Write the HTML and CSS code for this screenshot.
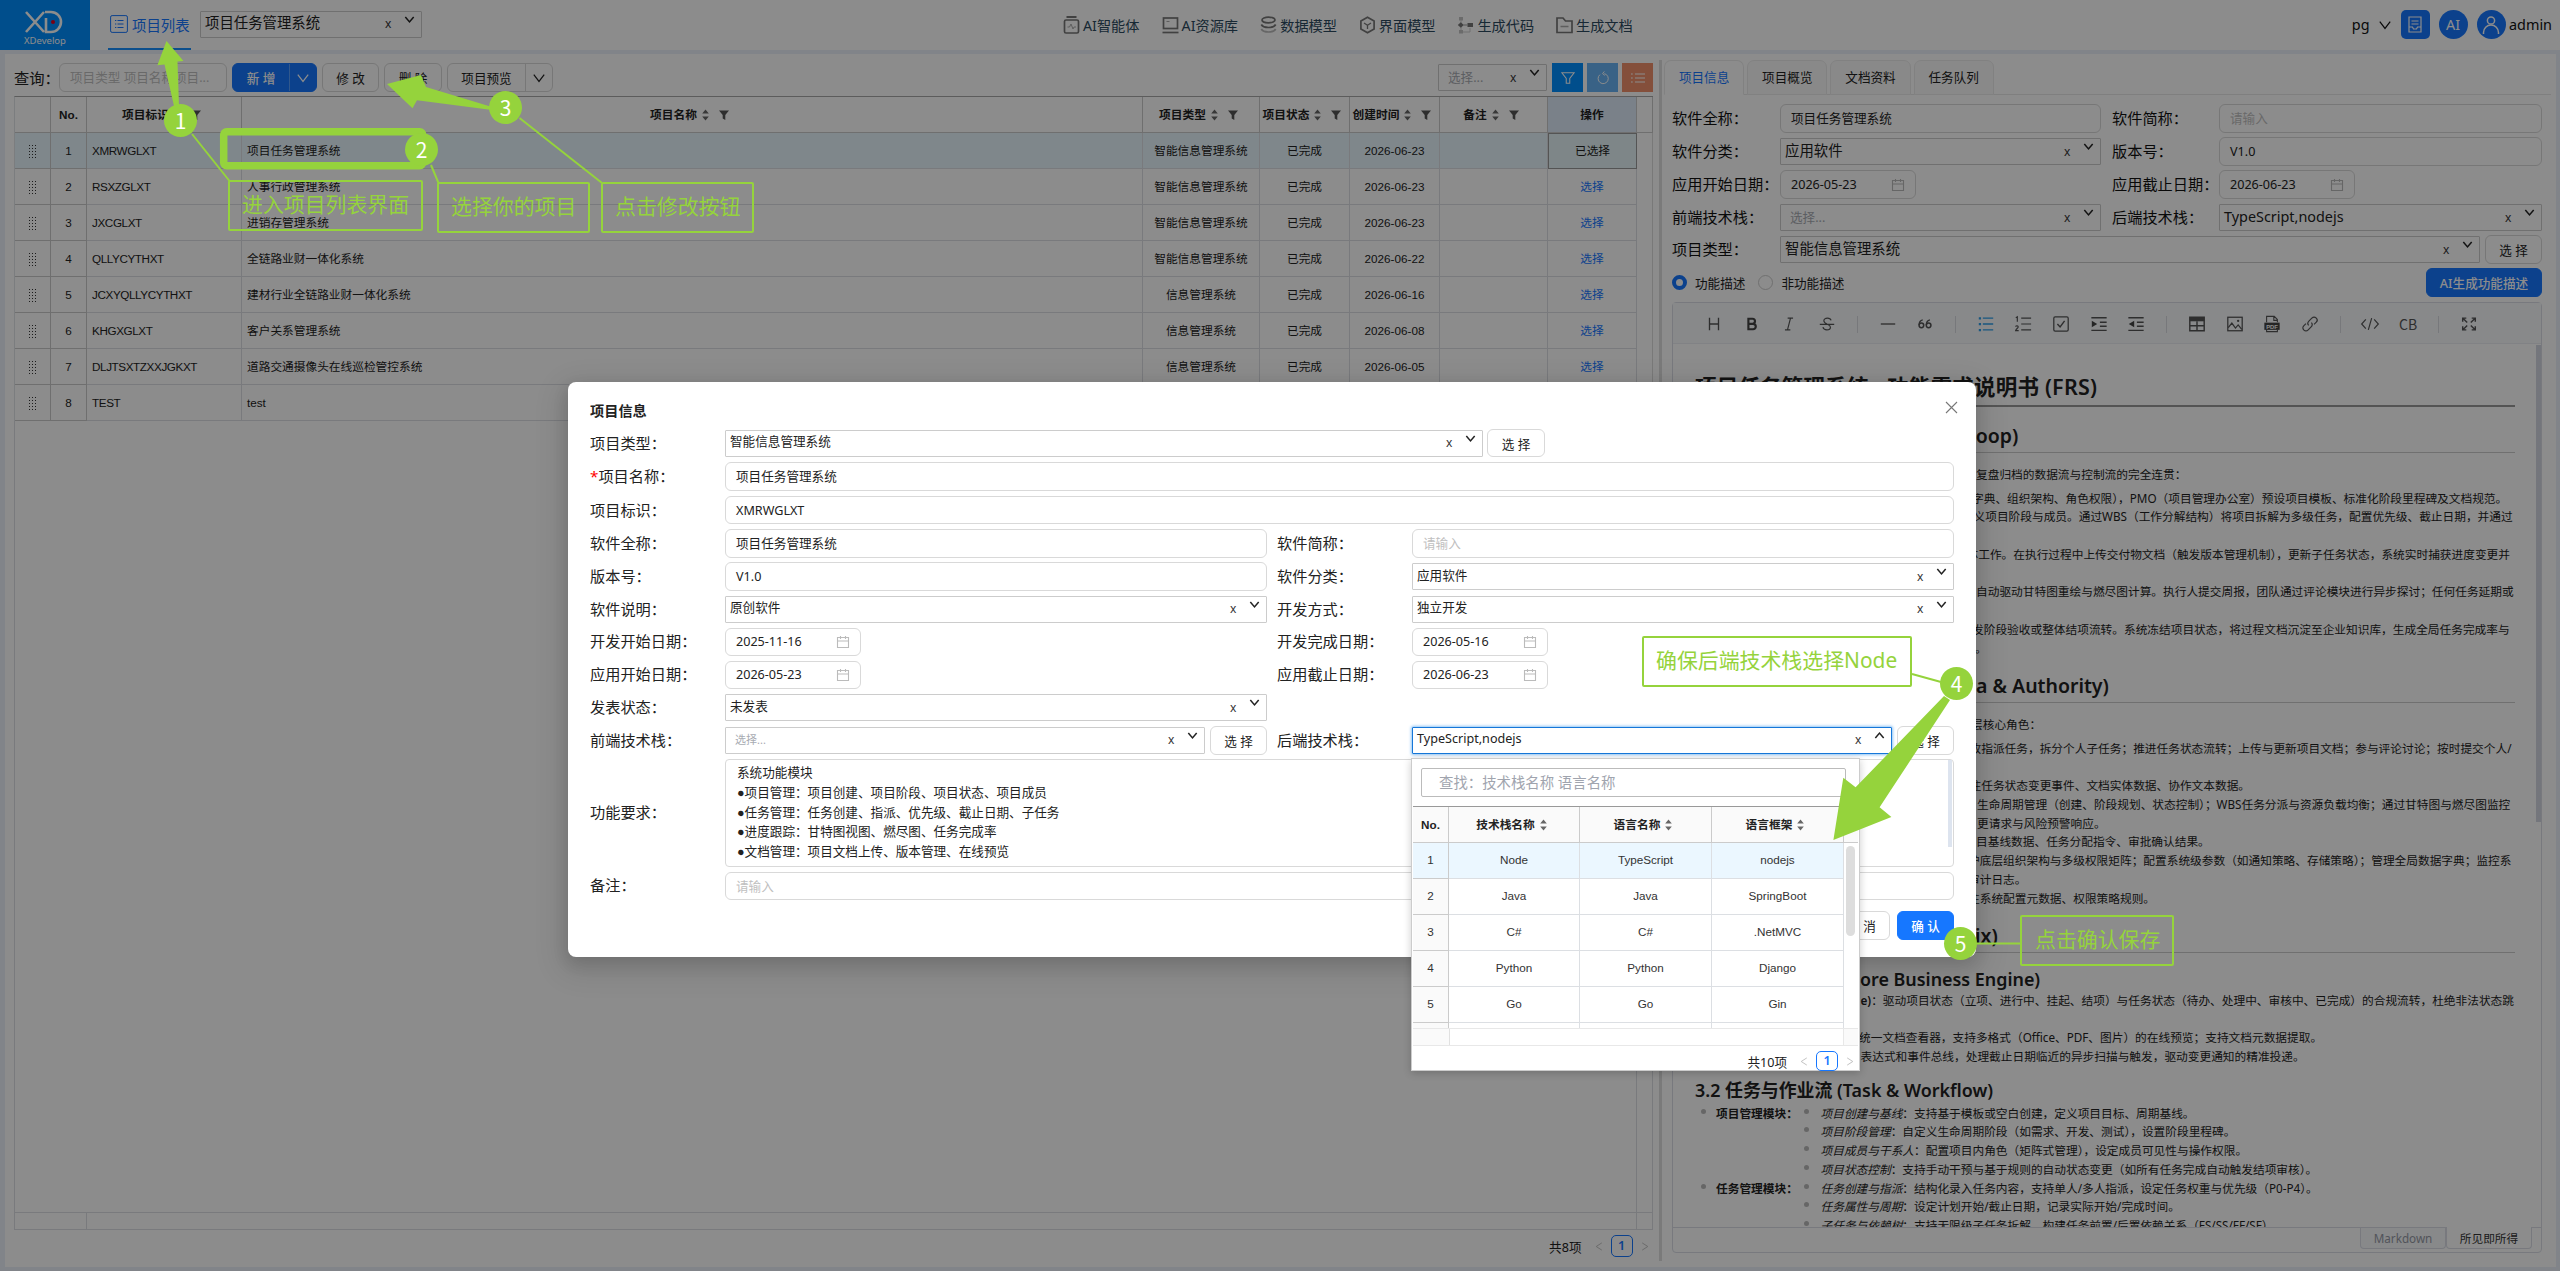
FILE: index.html
```html
<!DOCTYPE html>
<html lang="zh-CN">
<head>
<meta charset="utf-8">
<title>XDevelop</title>
<link rel="stylesheet" href="styles.css">
</head>
<body>
<svg class="defs" width="0" height="0">
  <symbol id="chev" viewBox="0 0 10 10"><path d="M1.2 2.8 5 7.2 8.8 2.8" fill="none" stroke="currentColor" stroke-width="1.4"/></symbol>
  <symbol id="down" viewBox="0 0 12 12"><path d="M.8 2.6 6 9.4 11.2 2.6" fill="none" stroke="currentColor" stroke-width="1.2"/></symbol>
  <symbol id="sort" viewBox="0 0 7 12"><path d="M3.5 .5 6.8 4.6H.2ZM3.500 11.500 .2 7.400h6.600Z" fill="currentColor"/></symbol>
  <symbol id="filter" viewBox="0 0 10 10"><path d="M0 .5h10L6.3 5v5L3.7 8.400V5Z" fill="currentColor"/></symbol>
  <symbol id="cal" viewBox="0 0 14 14"><path d="M1.500 2.500h11v10h-11ZM1.500 6h11M4.500 1v3M9.500 1v3" fill="none" stroke="currentColor" stroke-width="1.1"/></symbol>
  <symbol id="drag" viewBox="0 0 7 13"><path d="M0 .5h1M3 .5h1M6 .5h1M0 3.500h1M3 3.500h1M6 3.500h1M0 6.500h1M3 6.500h1M6 6.500h1M0 9.500h1M3 9.500h1M6 9.500h1M0 12.500h1M3 12.500h1M6 12.500h1" stroke="currentColor" stroke-width="1" shape-rendering="crispEdges"/></symbol>
  <symbol id="left" viewBox="0 0 10 12"><path d="M8.500 1.500 1.500 6l7 4.500" fill="none" stroke="currentColor" stroke-width="1.1"/></symbol>
  <symbol id="right" viewBox="0 0 10 12"><path d="M1.500 1.500 8.500 6l-7 4.500" fill="none" stroke="currentColor" stroke-width="1.1"/></symbol>
</svg>

<div class="page">
  <header class="top">
    <div class="logo">
      <svg width="42" height="24" viewBox="0 0 42 24"><path d="M2 2 20 22M20 2 2 22M21 2h6a10 10 0 0 1 0 20h-5V8" fill="none" stroke="#fff" stroke-width="2.600"/><circle cx="29" cy="12" r="2" fill="#e00020"/></svg>
      <span>XDevelop</span>
    </div>
    <div class="tab-main">
      <svg width="18" height="18" viewBox="0 0 18 18"><rect x=".6" y=".6" width="16.800" height="16.800" rx="1.500" fill="none" stroke="#1677ff"/><path d="M5 5.500h1.300M7.500 5.500h6M5 9h1.300M7.500 9h6M5 12.500h1.300M7.500 12.500h6" stroke="#1677ff"/></svg>
      <span>项目列表</span>
    </div>
    <div class="select big project"><span>项目任务管理系统</span><i>x</i><svg><use href="#chev"/></svg></div>
    <nav>
      <a><svg viewBox="0 0 16 18"><path d="M3 1h10" stroke="#777" stroke-width="2"/><rect x="1" y="4" width="14" height="13" rx="1.500" fill="none" stroke="#777" stroke-width="1.700"/><path d="M4 11h2l1.500-3 2 5 1-2h2" fill="none" stroke="#aaa"/></svg>AI智能体</a>
      <a><svg viewBox="0 0 16 18"><rect x="1" y="2" width="14" height="10.500" fill="none" stroke="#777" stroke-width="1.700"/><path d="M0 16.500h16" stroke="#777" stroke-width="1.700"/><path d="M4 5.500h3" stroke="#aaa"/></svg>AI资源库</a>
      <a><svg viewBox="0 0 16 18"><ellipse cx="8" cy="4" rx="6.500" ry="2.800" fill="none" stroke="#777" stroke-width="1.700"/><path d="M.8 8.500c2 4 12.400 4 14.400 0" fill="none" stroke="#777" stroke-width="1.700"/><path d="M.8 13c2 4 12.400 4 14.400 0" fill="none" stroke="#bbb" stroke-width="1.700"/></svg>数据模型</a>
      <a><svg viewBox="0 0 16 18"><path d="M8 1.200 14.600 5v8L8 16.800 1.400 13V5Z" fill="none" stroke="#777" stroke-width="1.700"/><path d="M4.500 7 8 9.200 11.500 7M8 9.200V13" fill="none" stroke="#777" stroke-width="1.300"/></svg>界面模型</a>
      <a><svg viewBox="0 0 16 18"><path d="M1.500 1h4v3.500h-4ZM1.500 14h4v3.500h-4Z" fill="#c4c4c4"/><path d="M3.500 4v3M3.500 11v3M5.500 16h7v-4" fill="none" stroke="#ccc"/><path d="m.3 9 3-2.800 3 2.800-3 2.800Z" fill="#777"/><rect x="10" y="7" width="5.500" height="4" fill="#777"/><path d="M6 9h4" stroke="#999"/></svg>生成代码</a>
      <a><svg viewBox="0 0 17 18"><path d="M1 2h6l2.500 3H16v11.500H1Z" fill="none" stroke="#777" stroke-width="1.700"/><path d="M4.500 10.500h8" stroke="#aaa" stroke-width="1.500"/></svg>生成文档</a>
    </nav>
    <div class="user">
      <span>pg</span><svg class="dn"><use href="#down"/></svg>
      <b class="sq"><svg width="16" height="20" viewBox="0 0 16 20"><path d="M2 2h12v15H2ZM4.500 6h7M4.500 9h7M2 12h3.500l1 2h3l1-2H14" fill="none" stroke="#fff" stroke-width="1.200"/></svg></b>
      <b>AI</b>
      <b><svg width="20" height="20" viewBox="0 0 20 20"><circle cx="10" cy="5.500" r="3.600" fill="none" stroke="#fff" stroke-width="1.500"/><path d="M2.500 19v-1.500a7 7 0 0 1 15 0V19" fill="none" stroke="#fff" stroke-width="1.500"/></svg></b>
      <span>admin</span>
    </div>
  </header>

  <main>
    <section class="left">
      <div class="bar">
        <span class="q">查询：</span>
        <div class="input ph search">项目类型 项目名称项目...</div>
        <div class="btn primary split"><span>新 增</span><em><svg><use href="#down"/></svg></em></div>
        <div class="btn w57">修 改</div>
        <div class="btn w58">删 除</div>
        <div class="btn split plain"><span>项目预览</span><em><svg><use href="#down"/></svg></em></div>
        <div class="select pick"><span class="ph">选择...</span><i>x</i><svg><use href="#chev"/></svg></div>
        <div class="sqb c1"><svg viewBox="0 0 16 16"><path d="M1 2h14L10 8.500V14H6V8.500Z" fill="none" stroke="#fff" stroke-width="1.200"/></svg></div>
        <div class="sqb c2"><svg viewBox="0 0 16 16"><path d="M9.500 3a5.800 5.800 0 1 1-5 1.200M9.500.5 7.500 3l2.500 2" fill="none" stroke="#fff" stroke-width="1.100"/></svg></div>
        <div class="sqb c3"><svg viewBox="0 0 16 16"><path d="M0 3.500h2M4.500 3.500H16M0 8h2M4.500 8H16M0 12.500h2M4.500 12.500H16" stroke="#fff" stroke-width="1.200"/></svg></div>
      </div>
      <table class="grid">
        <colgroup><col class="c36"><col class="c36"><col class="c155"><col><col class="c117"><col class="c90"><col class="c90"><col class="c108"><col class="c89"><col class="c16"></colgroup>
        <tr><th></th><th>No.</th>
          <th><span>项目标识<svg class="s"><use href="#sort"/></svg><svg class="f"><use href="#filter"/></svg></span></th>
          <th><span>项目名称<svg class="s"><use href="#sort"/></svg><svg class="f"><use href="#filter"/></svg></span></th>
          <th><span>项目类型<svg class="s"><use href="#sort"/></svg><svg class="f"><use href="#filter"/></svg></span></th>
          <th><span>项目状态<svg class="s"><use href="#sort"/></svg><svg class="f"><use href="#filter"/></svg></span></th>
          <th><span>创建时间<svg class="s"><use href="#sort"/></svg><svg class="f"><use href="#filter"/></svg></span></th>
          <th><span>备注<svg class="s"><use href="#sort"/></svg><svg class="f"><use href="#filter"/></svg></span></th>
          <th class="op">操作</th><th></th></tr>
        <tr class="on"><td><svg class="d"><use href="#drag"/></svg></td><td>1</td><td>XMRWGLXT</td><td>项目任务管理系统</td><td>智能信息管理系统</td><td>已完成</td><td>2026-06-23</td><td></td><td class="cur">已选择</td><td></td></tr>
        <tr><td><svg class="d"><use href="#drag"/></svg></td><td>2</td><td>RSXZGLXT</td><td>人事行政管理系统</td><td>智能信息管理系统</td><td>已完成</td><td>2026-06-23</td><td></td><td>选择</td><td></td></tr>
        <tr><td><svg class="d"><use href="#drag"/></svg></td><td>3</td><td>JXCGLXT</td><td>进销存管理系统</td><td>智能信息管理系统</td><td>已完成</td><td>2026-06-23</td><td></td><td>选择</td><td></td></tr>
        <tr><td><svg class="d"><use href="#drag"/></svg></td><td>4</td><td>QLLYCYTHXT</td><td>全链路业财一体化系统</td><td>智能信息管理系统</td><td>已完成</td><td>2026-06-22</td><td></td><td>选择</td><td></td></tr>
        <tr><td><svg class="d"><use href="#drag"/></svg></td><td>5</td><td>JCXYQLLYCYTHXT</td><td>建材行业全链路业财一体化系统</td><td>信息管理系统</td><td>已完成</td><td>2026-06-16</td><td></td><td>选择</td><td></td></tr>
        <tr><td><svg class="d"><use href="#drag"/></svg></td><td>6</td><td>KHGXGLXT</td><td>客户关系管理系统</td><td>信息管理系统</td><td>已完成</td><td>2026-06-08</td><td></td><td>选择</td><td></td></tr>
        <tr><td><svg class="d"><use href="#drag"/></svg></td><td>7</td><td>DLJTSXTZXXJGKXT</td><td>道路交通摄像头在线巡检管控系统</td><td>信息管理系统</td><td>已完成</td><td>2026-06-05</td><td></td><td>选择</td><td></td></tr>
        <tr><td><svg class="d"><use href="#drag"/></svg></td><td>8</td><td>TEST</td><td>test</td><td></td><td></td><td></td><td></td><td></td><td></td></tr>
      </table>
      <div class="rest"><i></i></div>
      <div class="hscroll"><i></i><b></b></div>
      <div class="pager"><span>共8项</span><svg><use href="#left"/></svg><b>1</b><svg><use href="#right"/></svg></div>
    </section>
    <div class="splitter"></div>
    <section class="right">
      <div class="tabs"><a class="act">项目信息</a><a>项目概览</a><a>文档资料</a><a>任务队列</a></div>
      <div class="form">
        <label>软件全称：</label><div class="input">项目任务管理系统</div><label class="g">软件简称：</label><div class="input ph">请输入</div>
        <label>软件分类：</label><div class="select big"><span>应用软件</span><i>x</i><svg><use href="#chev"/></svg></div><label class="g">版本号：</label><div class="input">V1.0</div>
        <label>应用开始日期：</label><div class="input date">2026-05-23<svg><use href="#cal"/></svg></div><label class="g">应用截止日期：</label><div class="input date">2026-06-23<svg><use href="#cal"/></svg></div>
        <label>前端技术栈：</label><div class="select"><span class="ph">选择...</span><i>x</i><svg><use href="#chev"/></svg></div><label class="g">后端技术栈：</label><div class="select big"><span>TypeScript,nodejs</span><i>x</i><svg><use href="#chev"/></svg></div>
        <label>项目类型：</label><div class="wide"><div class="select big"><span>智能信息管理系统</span><i>x</i><svg><use href="#chev"/></svg></div><div class="btn w57">选 择</div></div>
      </div>
      <div class="radios"><i class="sel"></i><span>功能描述</span><i></i><span>非功能描述</span><div class="btn primary">AI生成功能描述</div></div>
      <div class="editor">
        <div class="tools">
          <svg viewBox="0 0 20 20"><path d="M5 3v14M15 3v14M5 10h10" fill="none" stroke="#555" stroke-width="1.500"/></svg>
          <svg viewBox="0 0 20 20"><path d="M6 4.200h4.500a2.700 2.700 0 0 1 0 5.600H6ZM6 9.800h5.200a3 3 0 0 1 0 6H6Z" fill="none" stroke="#444" stroke-width="2.400"/></svg>
          <svg viewBox="0 0 20 20"><path d="M8.500 3.500h6M5.500 16.500h6M11.700 3.500 8.300 16.500" fill="none" stroke="#555" stroke-width="1.300"/></svg>
          <svg viewBox="0 0 20 20"><path d="M2 10.500h16M14.500 6C14 4 12.500 3.500 10.500 3.500 8 3.500 6.500 4.700 6.500 6.500c0 1.500 1 2.500 3.500 3.500M11 10.500c2 .8 2.800 1.800 2.800 3 0 2-1.500 3-4 3-2.300 0-3.800-1-4.300-3" fill="none" stroke="#555" stroke-width="1.300"/></svg>
          <u></u>
          <svg viewBox="0 0 20 20"><path d="M2 10h16" stroke="#555" stroke-width="1.500"/></svg>
          <svg viewBox="0 0 20 20"><circle cx="6" cy="11.500" r="2.600" fill="none" stroke="#555" stroke-width="1.700"/><circle cx="14" cy="11.500" r="2.600" fill="none" stroke="#555" stroke-width="1.700"/><path d="M3.500 11c0-3 1.500-5 4-5.500M11.500 11c0-3 1.500-5 4-5.500" fill="none" stroke="#555" stroke-width="1.500"/></svg>
          <u></u>
          <svg viewBox="0 0 20 20"><path d="M6.500 3.500H18M6.500 10H18M6.500 16.500H18" stroke="#2f9fe8" stroke-width="1.500"/><path d="M2 2.500h2.500V5H2ZM2 9h2.500v2.500H2ZM2 15.500h2.500V18H2Z" fill="#2f9fe8"/></svg>
          <svg viewBox="0 0 20 20"><path d="M8 3.500H19M8 10H19M8 16.500H19M2 3l1.700-1v5.500M1.800 13c.5-1.500 3-1.300 2.800.4-.1 1-2.600 2.500-2.800 4h3.400" fill="none" stroke="#555" stroke-width="1.300"/></svg>
          <svg viewBox="0 0 20 20"><rect x="2" y="2" width="16" height="16" rx="1.500" fill="none" stroke="#555" stroke-width="1.400"/><path d="m6 10 3 3.300L14 6.500" fill="none" stroke="#555" stroke-width="1.600"/></svg>
          <svg viewBox="0 0 20 20"><path d="M1.500 3h17M11 8h7.500M11 12.500h7.500M1.500 17h17" stroke="#555" stroke-width="1.500"/><path d="M2 6.500 8 10l-6 3.500Z" fill="#444"/></svg>
          <svg viewBox="0 0 20 20"><path d="M1.500 3h17M11 8h7.500M11 12.500h7.500M1.500 17h17" stroke="#555" stroke-width="1.500"/><path d="M8 6.500 2 10l6 3.500Z" fill="#444"/></svg>
          <u></u>
          <svg viewBox="0 0 20 20"><path d="M2 2.500h16v15H2ZM2 12h16M10 7v10.500" fill="none" stroke="#555" stroke-width="1.600"/><path d="M2 2.500h16V7H2Z" fill="#555"/></svg>
          <svg viewBox="0 0 20 20"><rect x="2" y="2.500" width="16" height="15" fill="none" stroke="#555" stroke-width="1.400"/><path d="m2.500 14 4-5 4 5.500 3-3.500 4 5" fill="none" stroke="#555" stroke-width="1.400"/><circle cx="13.500" cy="6.500" r="1.300" fill="#555"/></svg>
          <svg viewBox="0 0 20 20"><path d="M4 8V1.500h8.500L16 5v3M4 16v2.500h12V16M12 2v4h4" fill="none" stroke="#555" stroke-width="1.200"/><rect x="1.500" y="8.500" width="17" height="8" fill="#444"/><text x="10" y="15" text-anchor="middle">PDF</text></svg>
          <svg viewBox="0 0 20 20"><path d="m8.500 11.500c-2-2-.5-4 .5-5l3-3c2-2 4-1 5 0s1.500 3 0 4.500l-2.500 2.500M11.500 8.500c2 2 .5 4-.5 5l-3 3c-2 2-4 1-5 0s-1.500-3 0-4.500l2.500-2.500" fill="none" stroke="#555" stroke-width="1.300"/></svg>
          <u></u>
          <svg viewBox="0 0 24 20"><path d="m7 4.500-5 5.500 5 5.500M17 4.500l5 5.500-5 5.500M14 3l-4 14" fill="none" stroke="#555" stroke-width="1.400"/></svg>
          <b>CB</b>
          <u></u>
          <svg viewBox="0 0 20 20"><path d="M3 7.500V3.500h4M3.500 4 8 8.300M17 7.500V3.500h-4M16.500 4 12 8.300M3 12.500v4h4M3.500 16 8 11.700M17 12.500v4h-4M16.500 16 12 11.700" fill="none" stroke="#555" stroke-width="1.600"/></svg>
        </div>
        <div class="doc">
          <h1>项目任务管理系统 - 功能需求说明书 (FRS)</h1>
          <h2 class="a1">Loop)</h2>
          <p class="in281">复盘归档的数据流与控制流的完全连贯：</p>
          <div class="lines">
            <p class="in277">字典、组织架构、角色权限），PMO（项目管理办公室）预设项目模板、标准化阶段里程碑及文档规范。</p>
            <p class="in278">义项目阶段与成员。通过WBS（工作分解结构）将项目拆解为多级任务，配置优先级、截止日期，并通过</p>
            <p></p>
            <p class="in271">体工作。在执行过程中上传交付物文档（触发版本管理机制），更新子任务状态，系统实时捕获进度变更并</p>
            <p></p>
            <p class="in281">自动驱动甘特图重绘与燃尽图计算。执行人提交周报，团队通过评论模块进行异步探讨；任何任务延期或</p>
            <p></p>
            <p class="in277">发阶段验收或整体结项流转。系统冻结项目状态，将过程文档沉淀至企业知识库，生成全局任务完成率与</p>
            <p class="in280">。</p>
          </div>
          <h2 class="a2">a &amp; Authority)</h2>
          <p class="in276">层核心角色：</p>
          <div class="lines">
            <p class="in274">收指派任务，拆分个人子任务；推进任务状态流转；上传与更新项目文档；参与评论讨论；按时提交个人/</p>
            <p></p>
            <p class="in274">注任务状态变更事件、文档实体数据、协作文本数据。</p>
            <p class="in282">生命周期管理（创建、阶段规划、状态控制）；WBS任务分派与资源负载均衡；通过甘特图与燃尽图监控</p>
            <p class="in282">更请求与风险预警响应。</p>
            <p class="in281">目基线数据、任务分配指令、审批确认结果。</p>
            <p class="in273">护底层组织架构与多级权限矩阵；配置系统级参数（如通知策略、存储策略）；管理全局数据字典；监控系</p>
            <p class="in273">审计日志。</p>
            <p class="in273">注系统配置元数据、权限策略规则。</p>
          </div>
          <h2 class="a3">ix)</h2>
          <h3 class="a4">ore Business Engine)</h3>
          <div class="lines tight">
            <p class="in165"><b>e)</b>：驱动项目状态（立项、进行中、挂起、结项）与任务状态（待办、处理中、审核中、已完成）的合规流转，杜绝非法状态跳</p>
            <p></p>
            <p class="in164">统一文档查看器，支持多格式（Office、PDF、图片）的在线预览；支持文档元数据提取。</p>
            <p class="in165">表达式和事件总线，处理截止日期临近的异步扫描与触发，驱动变更通知的精准投递。</p>
          </div>
          <h3 class="a5">3.2 任务与作业流 (Task &amp; Workflow)</h3>
          <ul>
            <li><b>项目管理模块：</b>
              <ul><li><em>项目创建与基线</em>：支持基于模板或空白创建，定义项目目标、周期基线。</li>
              <li><em>项目阶段管理</em>：自定义生命周期阶段（如需求、开发、测试），设置阶段里程碑。</li>
              <li><em>项目成员与干系人</em>：配置项目内角色（矩阵式管理），设定成员可见性与操作权限。</li>
              <li><em>项目状态控制</em>：支持手动干预与基于规则的自动状态变更（如所有任务完成自动触发结项审核）。</li></ul></li>
            <li><b>任务管理模块：</b>
              <ul><li><em>任务创建与指派</em>：结构化录入任务内容，支持单人/多人指派，设定任务权重与优先级（P0-P4）。</li>
              <li><em>任务属性与周期</em>：设定计划开始/截止日期，记录实际开始/完成时间。</li>
              <li><em>子任务与依赖树</em>：支持无限级子任务拆解，构建任务前置/后置依赖关系（FS/SS/FF/SF）</li></ul></li>
          </ul>
          <i class="thumb"></i>
        </div>
        <div class="modes"><a>Markdown</a><a class="act">所见即所得</a></div>
      </div>
    </section>
  </main>
</div>

<div class="mask"></div>

<div class="modal">
  <div class="title">项目信息<svg width="13" height="13" viewBox="0 0 13 13"><path d="m1 1 11 11M12 1 1 12" stroke="#777" stroke-width="1.100"/></svg></div>
  <div class="mform">
    <label>项目类型：</label><div class="full"><div class="select w758"><span>智能信息管理系统</span><i>x</i><svg><use href="#chev"/></svg></div><div class="btn w58">选 择</div></div>
    <label><s>*</s>项目名称：</label><div class="full"><div class="input">项目任务管理系统</div></div>
    <label>项目标识：</label><div class="full"><div class="input">XMRWGLXT</div></div>
    <label>软件全称：</label><div class="input">项目任务管理系统</div><label class="g">软件简称：</label><div class="input ph">请输入</div>
    <label>版本号：</label><div class="input">V1.0</div><label class="g">软件分类：</label><div class="select"><span>应用软件</span><i>x</i><svg><use href="#chev"/></svg></div>
    <label>软件说明：</label><div class="select"><span>原创软件</span><i>x</i><svg><use href="#chev"/></svg></div><label class="g">开发方式：</label><div class="select"><span>独立开发</span><i>x</i><svg><use href="#chev"/></svg></div>
    <label>开发开始日期：</label><div class="input date">2025-11-16<svg><use href="#cal"/></svg></div><label class="g">开发完成日期：</label><div class="input date">2026-05-16<svg><use href="#cal"/></svg></div>
    <label>应用开始日期：</label><div class="input date">2026-05-23<svg><use href="#cal"/></svg></div><label class="g">应用截止日期：</label><div class="input date">2026-06-23<svg><use href="#cal"/></svg></div>
    <label>发表状态：</label><div class="select"><span>未发表</span><i>x</i><svg><use href="#chev"/></svg></div><label class="g"></label><div></div>
    <label>前端技术栈：</label><div class="pair"><div class="select"><span class="ph sm">选择...</span><i>x</i><svg><use href="#chev"/></svg></div><div class="btn w57">选 择</div></div><label class="g">后端技术栈：</label><div class="pair"><div class="select focus"><span>TypeScript,nodejs</span><i>x</i><svg class="up"><use href="#chev"/></svg></div><div class="btn w57">选 择</div></div>
  </div>
  <div class="mrow"><label>功能要求：</label><div class="area">系统功能模块<br>●项目管理：项目创建、项目阶段、项目状态、项目成员<br>●任务管理：任务创建、指派、优先级、截止日期、子任务<br>●进度跟踪：甘特图视图、燃尽图、任务完成率<br>●文档管理：项目文档上传、版本管理、在线预览<i></i></div></div>
  <div class="mrow r2"><label>备注：</label><div class="input ph">请输入</div></div>
  <div class="foot"><div class="btn w57">取 消</div><div class="btn primary w57">确 认</div></div>
</div>

<div class="drop">
  <div class="find">查找：技术栈名称 语言名称</div>
  <table>
    <colgroup><col class="k1"><col class="k2"><col class="k3"><col class="k3"><col></colgroup>
    <tr><th>No.</th><th><span>技术栈名称<svg class="s"><use href="#sort"/></svg></span></th><th><span>语言名称<svg class="s"><use href="#sort"/></svg></span></th><th><span>语言框架<svg class="s"><use href="#sort"/></svg></span></th><th></th></tr>
    <tr class="on"><td>1</td><td>Node</td><td>TypeScript</td><td>nodejs</td><td></td></tr>
    <tr><td>2</td><td>Java</td><td>Java</td><td>SpringBoot</td><td></td></tr>
    <tr><td>3</td><td>C#</td><td>C#</td><td>.NetMVC</td><td></td></tr>
    <tr><td>4</td><td>Python</td><td>Python</td><td>Django</td><td></td></tr>
    <tr><td>5</td><td>Go</td><td>Go</td><td>Gin</td><td></td></tr>
    <tr class="cut"><td></td><td></td><td></td><td></td><td></td></tr>
  </table>
  <div class="strip"><i></i><b></b></div>
  <div class="pager"><span>共10项</span><svg><use href="#left"/></svg><b>1</b><svg><use href="#right"/></svg></div>
  <i class="thumb"></i>
</div>

<div class="guide">
  <svg width="2560" height="1271" viewBox="0 0 2560 1271">
    <g fill="#95d33c"><path d="M166.500 41 183.500 61 177.500 61.500 179 106H174L164.500 64.500 157.400 65.300Z"/><path d="M387 84 421 75 426 87 492 107V110L417 100.300 412.500 108.300Z"/><path d="M1833.400 840 1843.300 777.700 1855.600 787.300 1944 696 1950 700 1879.600 807.300 1891.400 817Z"/></g>
    <g fill="none" stroke="#95d33c" stroke-width="2"><path d="M192 134 229.500 181M431 165 438.500 183M519.500 118 602 183M1912 674 1941 682M1977 943.500H2021"/></g>
    <rect x="223.700" y="131.700" width="199" height="34" rx="3" fill="none" stroke="#95d33c" stroke-width="7.500"/>
  </svg>
  <b class="n n1">1</b><b class="n n2">2</b><b class="n n3">3</b><b class="n n4">4</b><b class="n n5">5</b>
  <span class="t t1">进入项目列表界面</span><span class="t t2">选择你的项目</span><span class="t t3">点击修改按钮</span><span class="t t4">确保后端技术栈选择Node</span><span class="t t5">点击确认保存</span>
</div>
</body>
</html>
```
FILE: styles.css
```css
*{box-sizing:border-box}
body{margin:0;width:2560px;height:1271px;overflow:hidden;position:relative;font-family:"Noto Sans","Noto Sans CJK SC",sans-serif;font-size:12.6px;color:#222}
.defs{position:absolute}
i,em{font-style:normal}
b{font-weight:600}

/* shared controls */
.input{flex:1;height:29px;border:1px solid #d9d9d9;border-radius:6px;padding:0 10px;line-height:27px;background:#fff;font-size:12.6px;white-space:nowrap}
.ph{color:#bfbfbf}
.date{display:flex;align-items:center;justify-content:space-between;flex:none;width:136px}
.date svg{width:14px;height:14px;color:#bbb}
.select{flex:1;height:27px;border:1px solid #ccc;border-radius:1px;display:flex;align-items:center;padding:0 5px 0 4px;background:#fff;font-size:12.6px}
.select span{flex:1;line-height:22px;margin-top:-2px;white-space:nowrap}
.select span.ph{padding-left:5px;color:#a8abb2;margin-top:0}
.select span.sm{font-size:11px}
.select.big span{font-size:14.4px}
.select i{font-size:12px;color:#333;width:19px;line-height:20px}
.select svg{width:11px;height:11px;margin-top:-10px;color:#222;margin-right:1px}
.select svg.up{transform:rotate(180deg)}
.btn{height:29px;border:1px solid #d9d9d9;border-radius:6px;background:#fff;display:flex;align-items:center;justify-content:center;font-size:12.6px;color:#222;white-space:nowrap}
.btn.primary{background:#1677ff;border-color:#1677ff;color:#fff;font-weight:500}
.w57{width:57px}.w58{width:58px}
.split span{flex:1;text-align:center}
.split em{width:27px;height:27px;border-left:1px solid #d9d9d9;display:flex;align-items:center;justify-content:center}
.split.primary em{border-color:#5aa0ff}
.split svg{width:12px;height:12px}

/* header */
.page{background:#ebf0fa;height:1271px;display:flex;flex-direction:column}
.top{height:50px;background:#fff;display:flex;align-items:center;position:relative;font-size:14.4px}
.logo{width:90px;height:50px;background:#008eff;color:#fff;display:flex;flex-direction:column;align-items:center;padding-top:10px;font-size:9.500px;line-height:13px}
.tab-main{margin-left:18px;height:49px;width:83px;border-bottom:2px solid #1890ff;display:flex;align-items:center;gap:4px;padding-left:2px;color:#1677ff;white-space:nowrap}
.project{flex:none;width:222px;margin:-2px 0 0 9px}
nav{position:absolute;left:1063px;top:0;height:49px;display:flex;align-items:center;color:#2c4a60;font-size:14.2px}
nav a{width:98.600px;display:flex;align-items:center;gap:3px;white-space:nowrap}
nav svg{width:17px;height:18px}
.user{margin:-1px 0 0 auto;display:flex;align-items:center;padding-right:8px;gap:9px;color:#111}
.user .dn{width:12px;height:12px;margin-right:1px}
.user b{width:29px;height:29px;border-radius:50%;background:#1677ff;color:#fff;font-weight:400;display:flex;align-items:center;justify-content:center}
.user b.sq{border-radius:5px}
.user span:last-child{margin-left:-5.500px}

main{margin:4px 4px 4px 5px;height:1213px;background:#fff;display:flex}
.left{width:1654px;height:1208px;padding:9px 6px 0 9px;display:flex;flex-direction:column}
.bar{height:29px;display:flex;align-items:center;margin-bottom:4px}
.q{width:45px;font-size:15.300px;white-space:nowrap;margin-top:-2px}
.bar>.search{flex:none;width:168px;margin-right:5px;overflow:hidden}
.bar .btn{margin-right:5px}
.bar .primary{width:85px;margin-right:5px}
.bar .plain{width:106px}
.pick{flex:none!important;width:109px;margin-left:auto;margin-right:5px}
.sqb{width:31px;height:29px;display:flex;align-items:center;justify-content:center}
.sqb+.sqb{margin-left:4px}
.sqb svg{width:16px;height:14px}
.c1{background:#008eff}.c2{background:#68b3f5}.c3{background:#f0916c}

table{border-collapse:separate;border-spacing:0;table-layout:fixed;font-family:"Liberation Sans","Noto Sans CJK SC",sans-serif;font-size:11.700px}
.grid{width:1639px;border-left:1px solid #e1e4e8;border-top:1px solid #a8a8a8}
.c36{width:36px}.c155{width:155px}.c117{width:117px}.c90{width:90px}.c108{width:108px}.c89{width:89px}.c16{width:16px}
th,td{height:36px;padding:0;border-right:1px solid #dcdfe3;border-bottom:1px solid #dcdfe3;text-align:center;white-space:nowrap;line-height:16px}
th{font-weight:700;border-color:#cbcbcb}
th span{display:inline-flex;align-items:center;padding-right:5px}
.s{width:7px;height:12px;margin-left:5px;color:#666}
.f{width:10px;height:10px;margin-left:10px;color:#555}
.d{width:7px;height:13px;color:#333;vertical-align:middle}
.grid td:nth-child(-n+2){border-color:#cbcbcb}
.grid td:nth-child(3),.grid td:nth-child(4){text-align:left;padding-left:5px}
.grid td:nth-child(3){letter-spacing:-.4px}
.grid td:nth-child(9){color:#1677ff}
.grid .on td{background:#e8f6fd}
.grid .on td.cur{color:#222;border:1px solid #999;background:#e6f4f7}
.grid td:last-child{background:#fff!important;border-bottom:0;border-right-color:#ddd}
th.op{background:#dfecfa}
.rest{flex:1;border:1px solid #dcdfe3;border-width:0 1px 0 1px;display:flex;justify-content:flex-end}
.rest i{width:16px;border-left:1px solid #dcdfe3}
.hscroll{height:18px;border:1px solid #dcdfe3;display:flex;justify-content:space-between}
.hscroll i{width:72px;border-right:1px solid #dcdfe3}
.hscroll b{width:16px;border-left:1px solid #dcdfe3}
.pager{height:32px;display:flex;align-items:center;justify-content:flex-end;padding-right:4.500px;font-size:12.600px}
.pager span{margin-right:13px}
.pager svg{width:8px;height:11px;color:#bbb}
.pager b{width:22px;height:22px;border:1px solid #1677ff;border-radius:5px;color:#1677ff;text-align:center;line-height:20px;margin:0 8px}
.splitter{width:3px;height:1201px;margin-top:6px;background:#dedede}

.right{width:889px;padding:6px 0 0 2px}
.tabs{display:flex;gap:3px;height:35px;position:relative;width:887px;border-bottom:1px solid #e8e8e8}
.tabs a{width:80.200px;height:35px;border:1px solid #ececec;border-radius:7px 7px 0 0;background:#fafafa;text-align:center;line-height:34px}
.tabs .act{background:#fff;border-bottom-color:#fff;color:#1677ff}
.form{margin:7px 0 0 8px;width:870px;display:grid;grid-template-columns:108px 321px 118px 323px;grid-template-rows:33px 33px 33.500px 32px 32px;align-items:center}
label{font-size:15.200px;white-space:nowrap;line-height:22px;color:#222;margin-top:-1px}
.form label{color:#111}
label.g{padding-left:11px}
.wide{grid-column:2/5;display:flex;gap:5px;align-items:center}
.radios{margin-left:8px;width:870px;height:34.500px;display:flex;align-items:center}
.radios i{width:15px;height:15px;border:1px solid #ccc;border-radius:50%;margin-right:8px}
.radios i.sel{border:4.500px solid #1677ff}
.radios span{margin-right:13px}
.radios .btn{width:116px;margin-left:auto}
.editor{margin:2px 0 0 8px;width:870px;height:951px;border:1px solid #dadde6;border-radius:4px;display:flex;flex-direction:column}
.tools{height:41px;background:#f7f9fc;border-bottom:1px solid #ebedf2;display:flex;align-items:center;padding:2px 0 0 22.200px}
.tools svg{width:20px;height:18px;margin:0 8.850px;flex:none}
.tools u{width:1px;height:17px;background:#d9dbe0;margin:0 10.900px}
.tools b{width:20px;margin:0 8.850px;font:14px "Noto Sans CJK SC",sans-serif;color:#555;text-align:center}
.tools text{font:bold 6.500px "Liberation Sans",sans-serif;fill:#fff}
.doc{height:883px;overflow:hidden;padding:0 26px 0 22px;position:relative;font-size:11.700px;line-height:18.750px;color:#222;white-space:nowrap}
.doc .thumb{position:absolute;right:0;top:1px;width:5px;height:477px;background:#d3d8e2}
.doc h1,.doc h2,.doc h3,.doc p{margin:0}
.doc h1{font-size:21.500px;letter-spacing:.2px;line-height:28px;margin-top:29px;padding-bottom:4px;border-bottom:2px solid #999;font-weight:600}
.doc h2{font-size:19.500px;line-height:26px;margin-top:16px;padding-bottom:3px;border-bottom:1px solid #ccc;font-weight:600}
.doc h3{font-size:17.900px;line-height:22px;margin-top:15px;font-weight:600}
.doc h2+p{margin-top:12.400px;height:18.750px}
.doc p{height:18.750px}
.lines{margin-top:4.600px}
.lines.tight{margin-top:1.200px}
.lines+h2{margin-top:15.400px}
.lines+h3{margin-top:13.200px}
.doc h2.a1{padding-left:270px}
.a2{padding-left:281px}.a3{padding-left:280px}.a4{padding-left:165px}
.in281{padding-left:281px}.in277{padding-left:277px}.in278{padding-left:278.500px}.in271{padding-left:271.500px}.in280{padding-left:280px}.in276{padding-left:276px}.in274{padding-left:274.500px}.in282{padding-left:282px}.in273{padding-left:273px}.in165{padding-left:165.500px}.in164{padding-left:164px}
.doc ul{list-style:none;margin:2.600px 0 0;padding:0}
.doc ul ul{margin:0}
.doc li{display:flex}
.doc li em{font-style:italic}
.doc>ul>li::before,.doc li li::before{content:"";width:5px;height:5px;border-radius:50%;background:#bbb;margin:5px -11px 0 6px}
.doc li li::before{margin:5px 12px 0 -13px}
.doc>ul>li>b{margin-left:21px;width:100.500px}
.modes{flex:1;border-top:1px solid #dadde6;display:flex;justify-content:flex-end;padding-right:9px}
.modes a{width:86px;height:21px;border:1px solid #dadde6;border-top:0;border-radius:0 0 4px 4px;background:#f7f9fc;text-align:center;line-height:20px;color:#969aa5;font-size:11.700px}
.modes .act{background:#fff;color:#333;margin-top:-1px;height:22px;line-height:22px}

.mask{position:absolute;inset:0;background:rgba(0,0,0,.45)}

/* project dialog */
.modal{position:absolute;left:568px;top:382px;width:1408px;height:575px;border-radius:8px;background:#fff;padding:0 22px;box-shadow:0 6px 16px rgba(0,0,0,.12),0 9px 28px 8px rgba(0,0,0,.1)}
.title{height:44.500px;padding-top:18px;line-height:22px;font-size:14.200px;font-weight:700;display:flex;justify-content:space-between}
.title svg{margin:1px -4px 0 0}
.mform{display:grid;grid-template-columns:135px 542px 145px 542px;grid-template-rows:33px 33.500px 34px 33px 33px 32.500px 32.500px 33.500px 32.500px 32.500px;align-items:center}
.modal label.g{padding-left:10px}
.modal label{color:#222}
.modal s{color:#f00;text-decoration:none}
.modal .input{height:28.500px}
.modal .btn{height:28.500px}
.full{grid-column:2/5;display:flex;gap:4px;align-items:center}
.w758{flex:none;width:758px}
.pair{display:flex;gap:5px;align-items:center}
.focus{border-color:#1677d9;box-shadow:0 0 3px 1px #8fc4f5}
.mrow{display:flex;align-items:center;margin-top:2px}
.mrow label{width:135px}
.area{flex:1;height:108px;border:1px solid #d9d9d9;border-radius:4px;padding:4.500px 11px;line-height:19.800px;position:relative;font-family:"Liberation Sans","Noto Sans CJK SC",sans-serif}
.area i{position:absolute;right:1px;top:0;width:4px;height:87px;background:#dde4ef}
.r2{margin-top:5px}
.foot{display:flex;justify-content:flex-end;gap:7px;margin-top:11px}

/* stack picker */
.drop{position:absolute;left:1411px;top:758px;width:449px;height:313px;background:#fff;border:1px solid #ccc;box-shadow:0 2px 8px rgba(0,0,0,.2);padding:9px 1px 0}
.find{margin:0 12px 9px 8px;height:29px;border:1px solid #bbb;border-radius:2px;padding-left:17px;line-height:27px;font-size:14.400px;color:#a0a4ae}
.drop table{width:445px;border-top:1px solid #999;color:#333}
.drop th{color:#222}
.drop td{padding-bottom:2px}
.k1{width:36px}.k2{width:131px}.k3{width:132px}
.drop th,.drop td:first-child{background:#fafafa;border-color:#cbcbcb}
.drop th:last-child{border-right:0}
.drop td:last-child{border:0;background:#fff!important}
.drop .on td{background:#ebf7ff}
.drop .on td:first-child{background:#ebf7ff}
.drop .cut td{height:5px;border-bottom:0;line-height:0;padding:0}
.strip{height:18px;border:1px solid #e8e8e8;border-width:1px 0;display:flex;justify-content:space-between}
.strip i{width:37px;background:#fafafa;border-right:1px solid #e1e1e1}
.strip b{width:15px;background:#fafafa;border-left:1px solid #e8e8e8}
.drop .pager{height:26px;padding:4px 4px 0 0}
.drop .pager b{height:20px;line-height:18px}
.drop .thumb{position:absolute;right:4px;top:87px;width:9px;height:90px;border-radius:5px;background:#ddd}

/* guide callouts */
.guide{position:absolute;inset:0}
.guide svg{position:absolute;left:0;top:0}
.n{position:absolute;width:33px;height:33px;border-radius:50%;background:#95d33c;color:#fff;text-align:center;font:21px/32px "Noto Sans CJK SC",sans-serif}
.n1{left:164px;top:104px}.n2{left:405px;top:133px}.n3{left:489px;top:91px}.n4{left:1940px;top:667px}.n5{left:1944px;top:927px}
.t{position:absolute;height:51px;border:2px solid #95d33c;border-radius:2px;color:#95d33c;font-size:20.900px;line-height:45px;padding-left:12px;white-space:nowrap}
.t1{left:228px;top:180px;width:195px}.t2{left:437px;top:182px;width:153px}.t3{left:601px;top:182px;width:153px}.t4{left:1642px;top:636px;width:270px;background:#fff}.t5{left:2020px;top:915px;width:154px;padding-left:13px}
```
